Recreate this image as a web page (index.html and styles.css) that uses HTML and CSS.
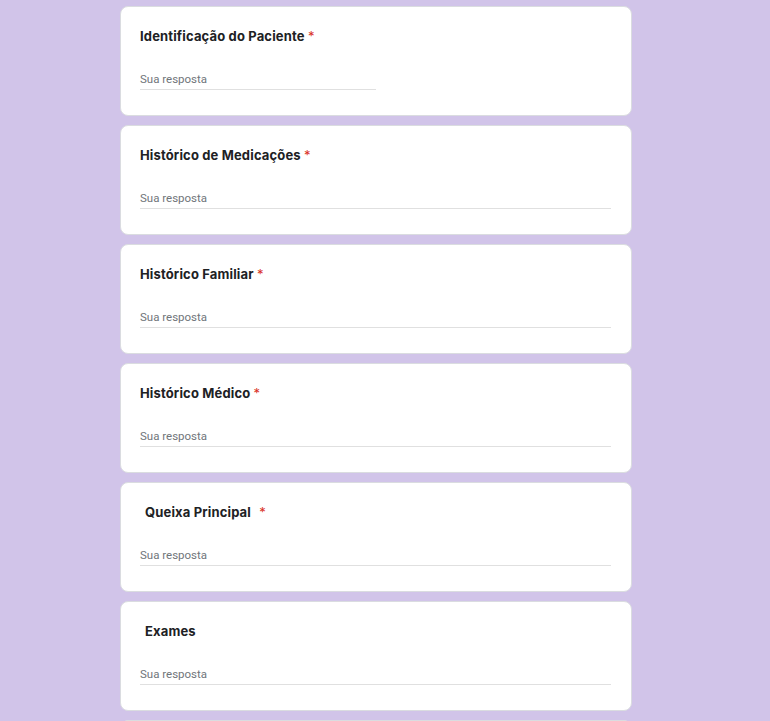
FILE: index.html
```html
<!DOCTYPE html>
<html lang="pt-BR">
<head>
<meta charset="utf-8">
<title>Formulário</title>
<link rel="stylesheet" href="styles.css">
</head>
<body>
<main class="form">
  <section class="card">
    <div class="title">Identificação do Paciente <span class="req">*</span></div>
    <div class="answer half">Sua resposta</div>
  </section>
  <section class="card">
    <div class="title">Histórico de Medicações <span class="req">*</span></div>
    <div class="answer">Sua resposta</div>
  </section>
  <section class="card">
    <div class="title">Histórico Familiar <span class="req">*</span></div>
    <div class="answer">Sua resposta</div>
  </section>
  <section class="card">
    <div class="title">Histórico Médico <span class="req">*</span></div>
    <div class="answer">Sua resposta</div>
  </section>
  <section class="card">
    <div class="title indent">Queixa Principal <span class="req wide">*</span></div>
    <div class="answer">Sua resposta</div>
  </section>
  <section class="card">
    <div class="title indent">Exames</div>
    <div class="answer">Sua resposta</div>
  </section>
  <section class="card"></section>
</main>
</body>
</html>
```

FILE: styles.css
```css
html, body {
  margin: 0;
  padding: 0;
  background: #d1c4e9;
  overflow: hidden;
}
.form {
  display: flex;
  flex-direction: column;
  gap: 9px;
  width: 512px;
  margin-left: 120px;
  padding-top: 6px;
}
.card {
  box-sizing: border-box;
  height: 110px;
  flex-shrink: 0;
  background: #fff;
  border: 1px solid #dadce0;
  border-radius: 8px;
  padding: 20px 20px 0 19px;
  display: flex;
  flex-direction: column;
}
.title {
  font-family: "Inter", "Open Sans", sans-serif;
  font-weight: 700;
  font-size: 13px;
  line-height: 18px;
  color: #202124;
  letter-spacing: 0.15px;
}
.title.indent {
  padding-left: 5px;
}
.req {
  color: #d93025;
  font-weight: 400;
}
.req.wide {
  margin-left: 5px;
}
.answer {
  margin-top: 26px;
  font-family: "Roboto", sans-serif;
  font-size: 11.5px;
  line-height: 16px;
  color: #70757a;
  padding-bottom: 2px;
  border-bottom: 1px solid #e0e0e0;
}
.answer.half {
  width: 236px;
}
```
